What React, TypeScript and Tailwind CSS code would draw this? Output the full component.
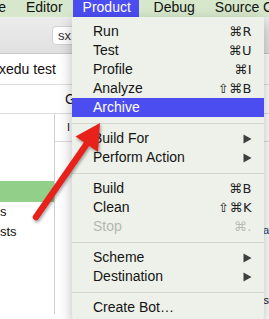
import React from 'react'

type Row =
    | { kind: 'item'; label: string; shortcut?: string; sub?: boolean; disabled?: boolean; active?: boolean }
    | { kind: 'sep' }

const rows: Row[] = [
    { kind: 'item', label: 'Run', shortcut: '⌘R' },
    { kind: 'item', label: 'Test', shortcut: '⌘U' },
    { kind: 'item', label: 'Profile', shortcut: '⌘I' },
    { kind: 'item', label: 'Analyze', shortcut: '⇧⌘B' },
    { kind: 'item', label: 'Archive', active: true },
    { kind: 'sep' },
    { kind: 'item', label: 'Build For', sub: true },
    { kind: 'item', label: 'Perform Action', sub: true },
    { kind: 'sep' },
    { kind: 'item', label: 'Build', shortcut: '⌘B' },
    { kind: 'item', label: 'Clean', shortcut: '⇧⌘K' },
    { kind: 'item', label: 'Stop', shortcut: '⌘.', disabled: true },
    { kind: 'sep' },
    { kind: 'item', label: 'Scheme', sub: true },
    { kind: 'item', label: 'Destination', sub: true },
    { kind: 'sep' },
    { kind: 'item', label: 'Create Bot…' },
]

function SubArrow() {
    return (
        <svg width="9" height="10" viewBox="0 0 9 10">
            <polygon points="0.5,0.5 8.5,5 0.5,9.5" fill="#3f3f3f" />
        </svg>
    )
}

function ProductMenu() {
    return (
        <div className="absolute left-[72px] top-[17px] w-[192px] rounded-b-[5px] bg-[#edf1e9] pt-[5px] pb-[4px] shadow-[0_5px_14px_rgba(0,0,0,0.28)]">
            {rows.map((r, i) =>
                r.kind === 'sep' ? (
                    <div key={i} className="flex h-[12px] items-center">
                        <div className="h-px w-full bg-[#d2d6cd]" />
                    </div>
                ) : (
                    <div
                        key={i}
                        className={`flex h-[19px] items-center justify-between pl-[21px] pr-[12px] text-[14px] ${
                            r.active ? 'bg-[#4c4df0] text-white' : r.disabled ? 'text-[#b4b6b1]' : 'text-[#141414]'
                        }`}
                    >
                        <span>{r.label}</span>
                        {r.shortcut && (
                            <span className={`font-['DejaVu_Sans',sans-serif] text-[13px] tracking-[0.5px] ${r.disabled ? 'text-[#b9bbb6]' : 'text-[#222]'}`}>
                                {r.shortcut}
                            </span>
                        )}
                        {r.sub && <SubArrow />}
                    </div>
                )
            )}
        </div>
    )
}

function RedArrow() {
    return (
        <svg className="pointer-events-none absolute left-0 top-0" width="269" height="319" viewBox="0 0 269 319">
            <g style={{ filter: 'drop-shadow(1px 2px 1.5px rgba(0,0,0,0.35))' }}>
                <line x1="36" y1="217" x2="88" y2="142" stroke="#e8211b" strokeWidth="6.5" strokeLinecap="round" />
                <polygon points="100,123 98,152 75.5,136.5" fill="#e8211b" />
            </g>
        </svg>
    )
}

export default function App() {
    return (
        <div className="relative h-[319px] w-[269px] overflow-hidden bg-white font-['Liberation_Sans',Arial,sans-serif] text-[#111]">
            {/* menu bar */}
            <div className="flex h-[17px] items-start bg-[#d6e7cb] text-[14px] leading-[15px]">
                <div className="flex w-[16px] shrink-0 justify-end overflow-hidden pr-[10px]">
                    <span className="shrink-0 whitespace-nowrap">Navigate</span>
                </div>
                <span className="shrink-0 px-[10px]">Editor</span>
                <span className="h-[17px] w-[66px] shrink-0 whitespace-nowrap bg-[#4c4df0] pl-[10px] text-white">Product</span>
                <span className="shrink-0 pl-[15px] pr-[10px]">Debug</span>
                <span className="shrink-0 whitespace-nowrap px-[10px]">Source Control</span>
            </div>

            {/* toolbar */}
            <div className="h-[37px] border-b border-[#c9c9c9] bg-gradient-to-b from-[#ececec] to-[#e1e1e1] pl-[52px] pt-[9px]">
                <div className="flex h-[19px] w-[34px] items-center rounded-[4px] border border-[#d2d2d2] bg-white pl-[5px] text-[13px] text-[#333]">
                    sx
                </div>
            </div>

            {/* project row */}
            <div className="flex h-[31px] items-center border-b border-[#dedede] text-[14px]">
                <span className="-ml-px">xedu test</span>
            </div>

            {/* tabs row */}
            <div className="flex h-[29px] items-center border-b border-[#dcdcdc] pl-[65px] text-[14px]">G</div>

            {/* editor split */}
            <div className="flex h-[200px]">
                <div className="flex w-[55px] flex-col border-r border-[#cfcfcf] pt-[67px] text-[13px]">
                    <div className="h-[21px] bg-[#92d08a]" />
                    <div className="h-[20px] leading-[20px]">s</div>
                    <div className="h-[20px] leading-[20px]">sts</div>
                </div>
                <div className="flex flex-1 flex-col">
                    <div className="flex h-[28px] items-center border-b border-[#dcdcdc] pl-[12px] text-[11px]">I</div>
                    <div className="h-[78px]" />
                    <div className="flex h-[20px] items-center justify-end text-[11px] text-[#203a6a]">a</div>
                    <div className="h-[50px]" />
                    <div className="flex h-[20px] items-center justify-end text-[11px]">s</div>
                </div>
            </div>

            <ProductMenu />
            <RedArrow />
        </div>
    )
}
